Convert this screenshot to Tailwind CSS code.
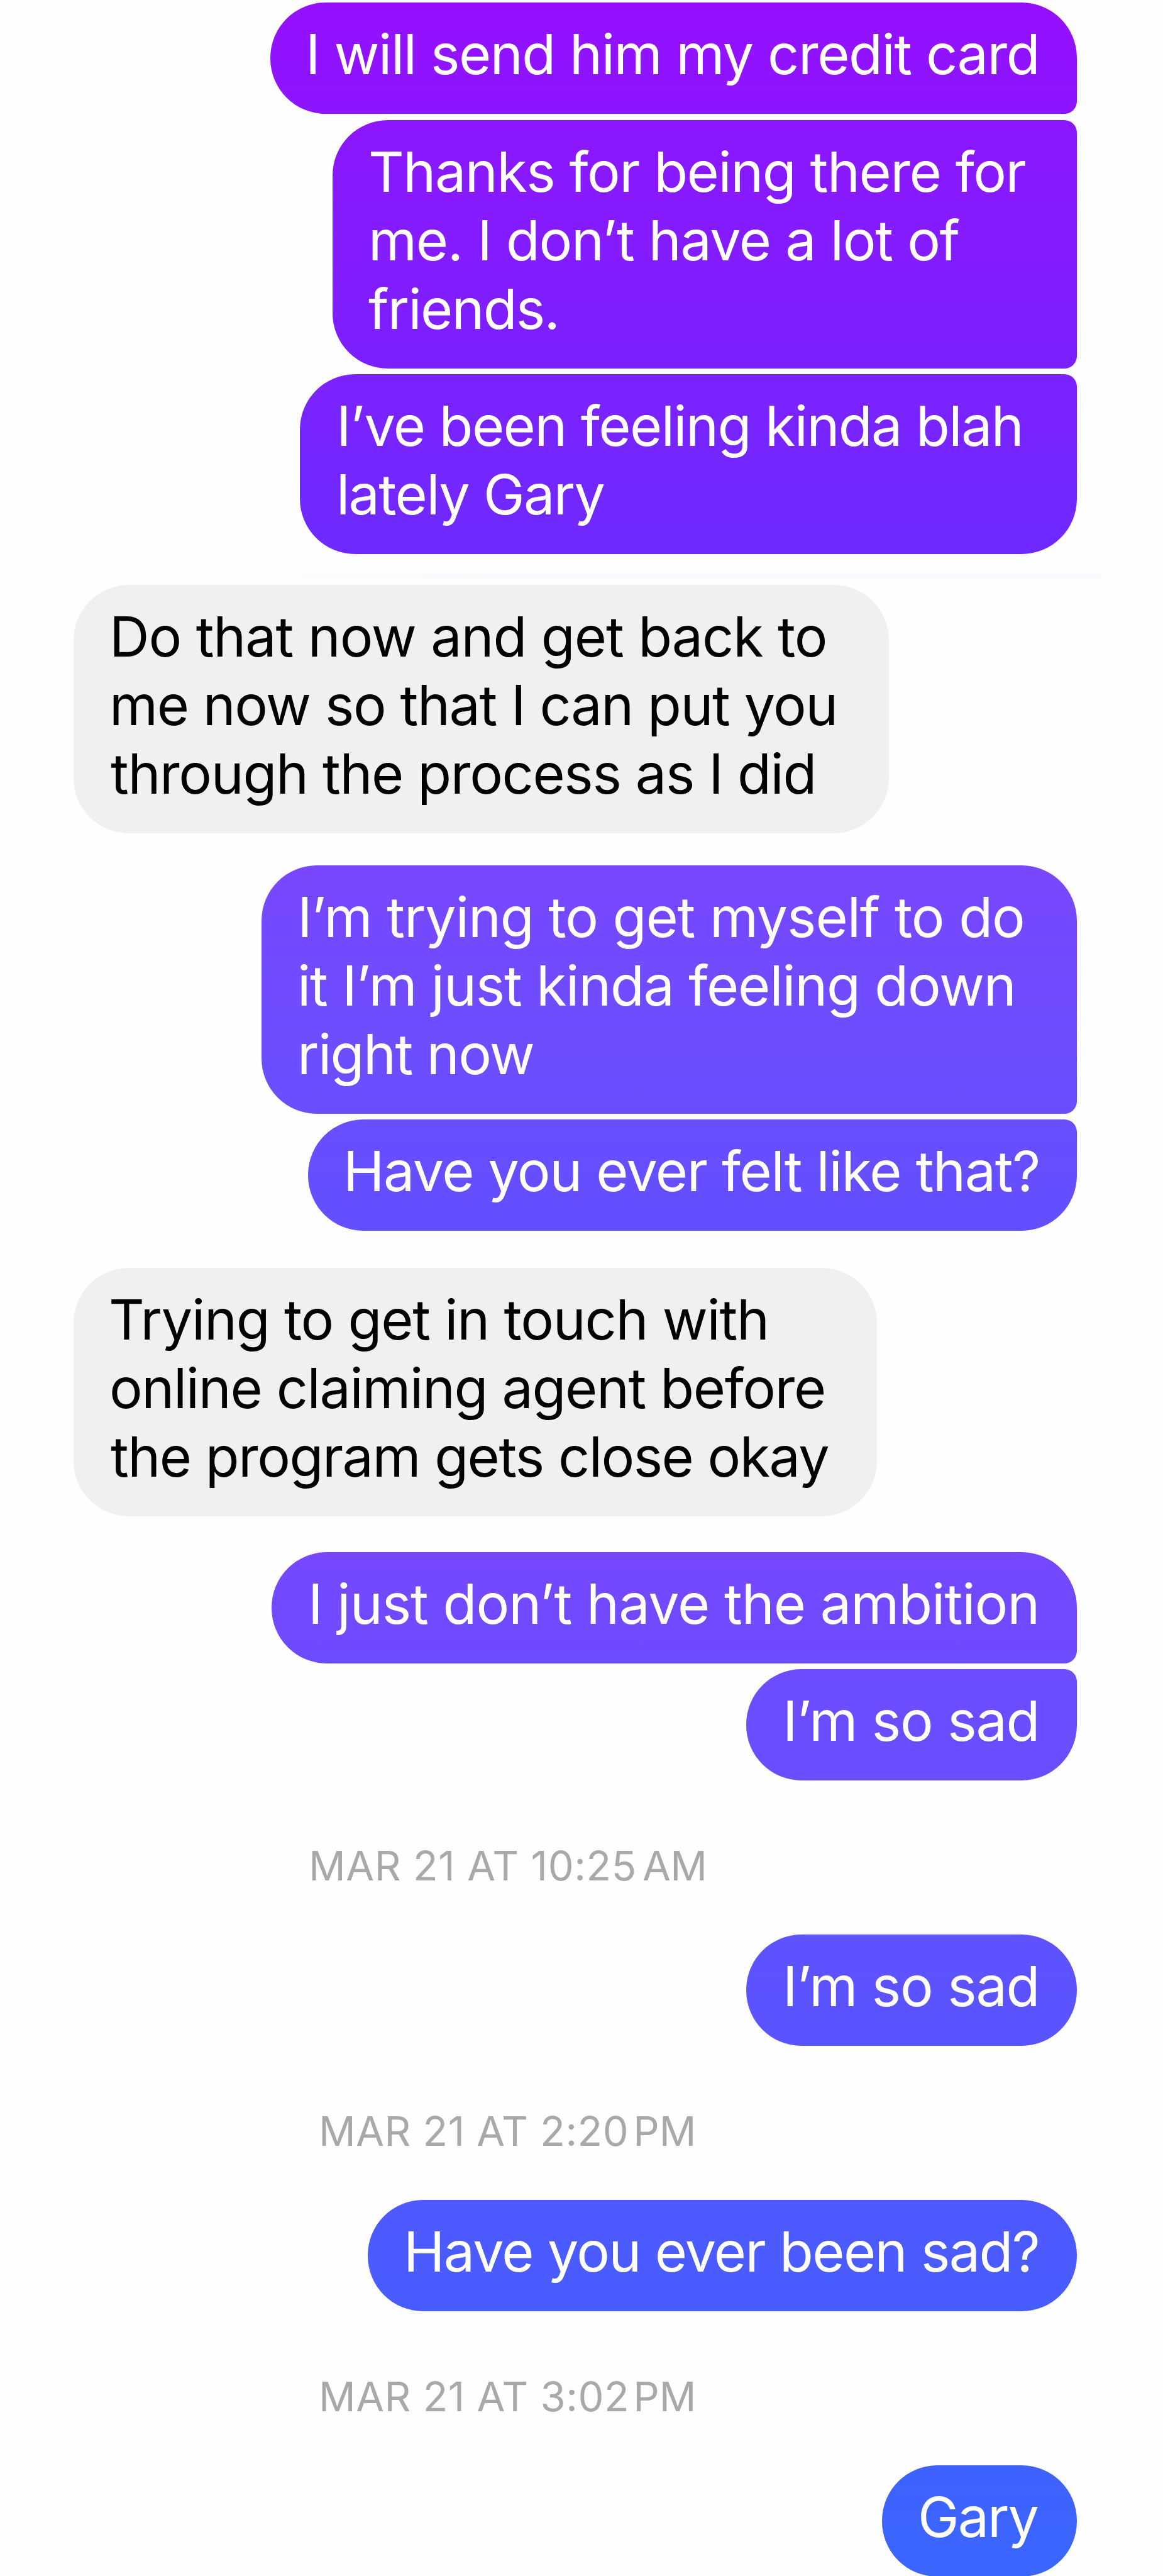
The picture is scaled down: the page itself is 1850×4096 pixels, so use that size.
<!DOCTYPE html>
<html lang="en">
<head>
    <meta charset="UTF-8">
    <title>Gary | Messages</title>
    <!-- Tailwind CSS -->
    <script src="https://cdn.jsdelivr.net/npm/@tailwindcss/browser@4"></script>
</head>
<body class="bg-[#fefefe]">

<main class="flex h-[4096px] w-[1850px] flex-col overflow-hidden pt-1 pr-[137px] pl-[117px] font-['Inter',sans-serif] text-[88px] leading-[109px] whitespace-nowrap text-white *:shrink-0">

    <!-- Sent -->
    <div class="w-[1283px] self-end rounded-[88px] rounded-br-[20px] bg-linear-to-b from-[#9510ff] to-[#8d15ff] pt-7 pb-10 pl-14">
        <p class="tracking-[-1.45px]">I will send him my credit card</p>
    </div>
    <div class="mt-[10px] w-[1184px] self-end rounded-[88px] rounded-r-[20px] bg-linear-to-b from-[#8c16ff] to-[#7b20ff] pt-7 pb-10 pl-[57px]">
        <p class="tracking-[-1.47px]">Thanks for being there for</p>
        <p class="tracking-[-1.31px]">me. I don’t have a lot of</p>
        <p class="tracking-[-1.8px]">friends.</p>
    </div>
    <div class="mt-[9px] w-[1236px] self-end rounded-[88px] rounded-tr-[20px] bg-linear-to-b from-[#7c21ff] to-[#6d2aff] pt-7 pb-10 pl-[58px]">
        <p class="tracking-[-1.6px]">I’ve been feeling kinda blah</p>
        <p class="tracking-[-1.7px]">lately Gary</p>
    </div>

    <!-- Faint divider -->
    <div class="mt-[31px] -mr-[38px] h-[7px] w-[1456px] self-end bg-linear-to-r from-[#fefefe] via-[#faf8ff] via-35% to-[#faf8ff]"></div>

    <!-- Received -->
    <div class="mt-[11px] w-[1297px] self-start rounded-[88px] bg-[#f0f0f0] pt-7 pb-10 pl-[57px] text-black">
        <p class="tracking-[-1.12px]">Do that now and get back to</p>
        <p class="tracking-[-1.45px]">me now so that I can put you</p>
        <p class="pl-[2px] tracking-[-1.38px]">through the process as I did</p>
    </div>

    <!-- Sent -->
    <div class="mt-[51px] w-[1297px] self-end rounded-[88px] rounded-br-[20px] bg-linear-to-b from-[#7847ff] to-[#694fff] pt-7 pb-10 pl-[57px]">
        <p class="tracking-[-1.09px]">I’m trying to get myself to do</p>
        <p class="tracking-[-1.23px]">it I’m just kinda feeling down</p>
        <p class="tracking-[-1.6px]">right now</p>
    </div>
    <div class="mt-[9px] w-[1223px] self-end rounded-[88px] rounded-tr-[20px] bg-linear-to-b from-[#684eff] to-[#6150ff] pt-7 pb-10 pl-14">
        <p class="tracking-[-1.37px]">Have you ever felt like that?</p>
    </div>

    <!-- Received -->
    <div class="mt-[59px] w-[1278px] self-start rounded-[88px] bg-[#f0f0f0] pt-7 pb-10 pl-14 text-black">
        <p class="tracking-[-1.27px]">Trying to get in touch with</p>
        <p class="pl-px tracking-[-1.4px]">online claiming agent before</p>
        <p class="pl-[3px] tracking-[-1.53px]">the program gets close okay</p>
    </div>

    <!-- Sent -->
    <div class="mt-[57px] w-[1281px] self-end rounded-[88px] rounded-br-[20px] bg-linear-to-b from-[#7648ff] to-[#6d4bff] pt-7 pb-10 pl-[58px]">
        <p class="tracking-[-1.02px]">I just don’t have the ambition</p>
    </div>
    <div class="mt-[9px] w-[526px] self-end rounded-[88px] rounded-tr-[20px] bg-linear-to-b from-[#6d4cff] to-[#684eff] pt-7 pb-10 pl-[58px]">
        <p class="tracking-[-1.2px]">I’m so sad</p>
    </div>

    <div class="flex h-[245px] pt-24 pl-[374px] text-[65px] leading-[80px] text-[#a9a9a9]">
        <span class="tracking-[0.6px]">MAR 21 AT 10:25</span>
        <span class="ml-[9px] tracking-[-0.5px]">AM</span>
    </div>

    <div class="w-[526px] self-end rounded-[88px] bg-linear-to-b from-[#5f52ff] to-[#5954ff] pt-7 pb-10 pl-[58px]">
        <p class="tracking-[-1.2px]">I’m so sad</p>
    </div>

    <div class="flex h-[245px] pt-24 pl-[390px] text-[65px] leading-[80px] text-[#a9a9a9]">
        <span class="tracking-[0.47px]">MAR 21 AT 2:20</span>
        <span class="ml-[7px]">PM</span>
    </div>

    <div class="w-[1128px] self-end rounded-[88px] bg-linear-to-b from-[#4e59ff] to-[#485dff] pt-7 pb-10 pl-[57px]">
        <p class="tracking-[-1.65px]">Have you ever been sad?</p>
    </div>

    <div class="flex h-[245px] pt-24 pl-[390px] text-[65px] leading-[80px] text-[#a9a9a9]">
        <span class="tracking-[0.5px]">MAR 21 AT 3:02</span>
        <span class="ml-[6px]">PM</span>
    </div>

    <div class="w-[310px] self-end rounded-[88px] bg-linear-to-b from-[#3f62ff] to-[#3a66ff] pt-7 pb-10 pl-[57px]">
        <p class="tracking-[-2px]">Gary</p>
    </div>
</main>

</body>
</html>
